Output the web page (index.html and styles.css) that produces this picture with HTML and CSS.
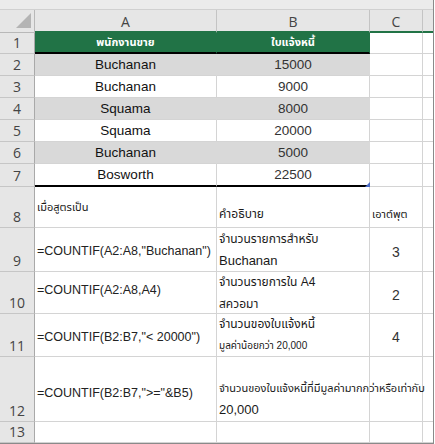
FILE: index.html
```html
<!DOCTYPE html>
<html lang="th">

<head>
    <meta charset="UTF-8">
    <meta name="viewport" content="width=device-width, initial-scale=1.0">
    <title>COUNTIF</title>
    <link rel="stylesheet" href="styles.css">
</head>

<body>
    <div class="sheet">
        <div class="strip"></div>

        <!-- column headers -->
        <div class="cell corner"><span class="tri"></span></div>
        <div class="cell ch">A</div>
        <div class="cell ch">B</div>
        <div class="cell ch">C</div>
        <div class="cell ch edge"></div>

        <!-- 1 -->
        <div class="cell rh">1</div>
        <div class="cell hd thick">พนักงานขาย</div>
        <div class="cell hd thick">ใบแจ้งหนี้</div>
        <div class="cell"></div>
        <div class="cell edge"></div>

        <!-- 2 -->
        <div class="cell rh">2</div>
        <div class="cell data alt">Buchanan</div>
        <div class="cell num alt">15000</div>
        <div class="cell"></div>
        <div class="cell edge"></div>

        <!-- 3 -->
        <div class="cell rh">3</div>
        <div class="cell data">Buchanan</div>
        <div class="cell num">9000</div>
        <div class="cell"></div>
        <div class="cell edge"></div>

        <!-- 4 -->
        <div class="cell rh">4</div>
        <div class="cell data alt">Squama</div>
        <div class="cell num alt">8000</div>
        <div class="cell"></div>
        <div class="cell edge"></div>

        <!-- 5 -->
        <div class="cell rh">5</div>
        <div class="cell data">Squama</div>
        <div class="cell num">20000</div>
        <div class="cell"></div>
        <div class="cell edge"></div>

        <!-- 6 -->
        <div class="cell rh">6</div>
        <div class="cell data alt">Buchanan</div>
        <div class="cell num alt">5000</div>
        <div class="cell"></div>
        <div class="cell edge"></div>

        <!-- 7 -->
        <div class="cell rh">7</div>
        <div class="cell data thick">Bosworth</div>
        <div class="cell num thick handle">22500</div>
        <div class="cell"></div>
        <div class="cell edge"></div>

        <!-- 8 -->
        <div class="cell rh">8</div>
        <div class="cell text mid th-sm">เมื่อสูตรเป็น</div>
        <div class="cell text bot th-md">คำอธิบาย</div>
        <div class="cell text bot th-sm">เอาต์พุต</div>
        <div class="cell edge"></div>

        <!-- 9 -->
        <div class="cell rh">9</div>
        <div class="cell formula mid">=COUNTIF(A2:A8,"Buchanan")</div>
        <div class="cell desc">
            <span class="line th-md">จำนวนรายการสำหรับ</span>
            <span class="line">Buchanan</span>
        </div>
        <div class="cell result">3</div>
        <div class="cell edge"></div>

        <!-- 10 -->
        <div class="cell rh">10</div>
        <div class="cell formula up">=COUNTIF(A2:A8,A4)</div>
        <div class="cell desc">
            <span class="line th-md">จำนวนรายการใน A4</span>
            <span class="line th-md">สควอมา</span>
        </div>
        <div class="cell result">2</div>
        <div class="cell edge"></div>

        <!-- 11 -->
        <div class="cell rh">11</div>
        <div class="cell formula mid">=COUNTIF(B2:B7,"&lt; 20000")</div>
        <div class="cell desc">
            <span class="line th-md">จำนวนของใบแจ้งหนี้</span>
            <span class="line th-xs">มูลค่าน้อยกว่า 20,000</span>
        </div>
        <div class="cell result">4</div>
        <div class="cell edge"></div>

        <!-- 12 -->
        <div class="cell rh">12</div>
        <div class="cell formula mid low">=COUNTIF(B2:B7,"&gt;="&amp;B5)</div>
        <div class="cell desc bot">
            <span class="line th-sm">จำนวนของใบแจ้งหนี้ที่มีมูลค่ามากกว่าหรือเท่ากับ</span>
            <span class="line">20,000</span>
        </div>
        <div class="cell"></div>
        <div class="cell edge"></div>

        <!-- 13 -->
        <div class="cell rh">13</div>
        <div class="cell"></div>
        <div class="cell"></div>
        <div class="cell"></div>
        <div class="cell edge"></div>
    </div>
</body>

</html>
```

FILE: styles.css
```css
body {
    margin: 0;
    background-color: white;
    font-family: "Liberation Sans", "Noto Sans Thai", Tahoma, sans-serif;
    color: #1a1a1a;
}

.sheet {
    display: grid;
    grid-template-columns: 35px 182px 153px 53px 10px;
    grid-template-rows: 10px 23px 21px 22px 22px 22px 22px 22px 23px 41px 44px 42px 43px 65px 21px;
    width: 433px;
    border-right: 1px solid #8a8a8a;
    border-bottom: 1px solid #8a8a8a;
}

.strip {
    grid-column: 1 / -1;
    background-color: #ebebeb;
    border-bottom: 1px solid #d0d0d0;
    box-sizing: border-box;
}

.cell {
    box-sizing: border-box;
    border-right: 1px solid #d4d4d4;
    border-bottom: 1px solid #d4d4d4;
    display: flex;
    align-items: center;
    justify-content: center;
    font-size: 13px;
    white-space: nowrap;
    min-width: 0;
    position: relative;
}

/* headers */
.corner {
    background-color: #e6e6e6;
    border-right: 1px solid #b8b8b8;
    border-bottom: 1px solid #b8b8b8;
    justify-content: flex-end;
    align-items: flex-end;
    padding: 0 3px 4px 0;
}

.tri {
    width: 0;
    height: 0;
    border-left: 15px solid transparent;
    border-bottom: 15px solid #b4b4b4;
}

.ch {
    background-color: #e6e6e6;
    border-right: 1px solid #c4c4c4;
    border-bottom: 2px solid #217346;
    font-family: "Open Sans", sans-serif;
    font-size: 14px;
    color: #444;
    padding-top: 1px;
}

.ch.edge {
    border-right: none;
}

.rh {
    background-color: #e6e6e6;
    border-right: 1px solid #a9a9a9;
    border-bottom: 1px solid #c6c6c6;
    font-family: "Open Sans", sans-serif;
    font-size: 14px;
    color: #444;
    align-items: flex-end;
    line-height: 20px;
}

.edge {
    border-right: none;
}

/* table data */
.hd {
    background-color: #217346;
    color: white;
    font-size: 11px;
    font-weight: bold;
    border-right-color: #217346;
}

.thick {
    border-bottom: 2px solid #000;
}

.data {
    font-size: 13.5px;
    color: #111;
}

.num {
    font-size: 13.5px;
    color: #333;
}

.alt {
    background-color: #d9d9d9;
    border-right-color: #d9d9d9;
}

.handle::after {
    content: "";
    position: absolute;
    right: -1px;
    bottom: -2px;
    width: 0;
    height: 0;
    border-left: 5px solid transparent;
    border-bottom: 5px solid #4a6bc4;
}

/* formulas */
.text {
    justify-content: flex-start;
    padding-left: 2px;
}

.mid {
    align-items: center;
}

.bot {
    align-items: flex-end;
    padding-bottom: 4px;
}

.formula {
    justify-content: flex-start;
    padding-left: 2px;
    font-size: 12.5px;
    color: #222;
}

.formula.up {
    align-items: flex-start;
    padding-top: 11px;
}

.formula.mid {
    padding-top: 3px;
}

.formula.low {
    padding-top: 8px;
}

.desc {
    flex-direction: column;
    align-items: flex-start;
    justify-content: center;
    padding-left: 2px;
    z-index: 1;
}

.desc.bot {
    justify-content: flex-end;
    padding-bottom: 0;
}

.line {
    line-height: 22px;
    font-size: 13px;
}

.result {
    font-size: 14px;
    color: #333;
    padding-top: 4px;
}

.th-xs {
    font-size: 10px;
}

.th-sm {
    font-size: 11px;
}

.th-md {
    font-size: 12px;
}
```
